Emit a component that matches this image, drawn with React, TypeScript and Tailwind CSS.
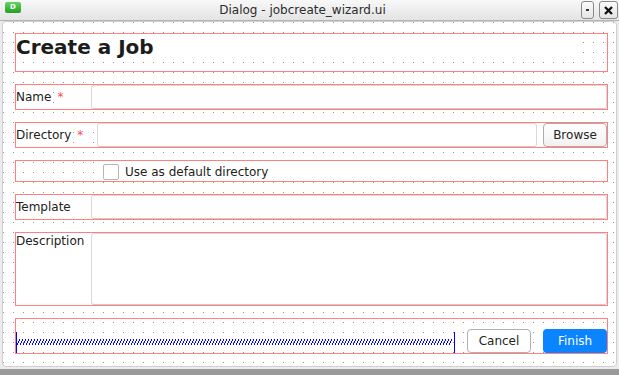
import { ReactNode } from "react"

// spring drawn by the designer for a horizontal spacer
const SPRING_W = 439
const SPRING_H = 21
const springPath = (() => {
  let d = `M0.5 0V${SPRING_H}M${SPRING_W - 0.5} 0V${SPRING_H}`
  for (let x = 1; x < SPRING_W - 3; x += 3) {
    d += `M${x} 13L${x + 3} 7`
  }
  return d
})()

const Box = ({ className = "", children }: { className?: string; children?: ReactNode }) => (
  <div className={`border border-[#ff8080] flex ${className}`}>{children}</div>
)

const fieldCls =
  "min-w-0 flex-1 bg-white border border-[#dadada] border-b-[#cbcbcb] rounded-[3px] outline-none px-1"

const App = () => {
  return (
    <div className="w-[619px] h-[375px] flex flex-col bg-[#ececec] overflow-hidden font-['DejaVu_Sans',sans-serif] text-[12px] text-[#222]">
      {/* Title bar */}
      <div className="h-[21px] shrink-0 flex items-center border-b border-[#b3b3b3] bg-[linear-gradient(#f8f8f8,#e4e4e4)]">
        <div className="w-[24px] self-start pt-[2px] pl-[5px]">
          <div className="w-[16px] h-[11px] rounded-[2px] bg-[linear-gradient(#63d563,#249e24)] flex items-center justify-center text-white text-[7px] font-bold leading-none">
            D
          </div>
        </div>
        <div className="flex-1 text-center leading-[20px] text-[#2c2c2c]">Dialog - jobcreate_wizard.ui</div>
        <div className="flex items-center gap-[5px] mr-[1px]">
          <div className="w-[13px] h-[18px] rounded-[3px] border border-[#8a8a8a] bg-[linear-gradient(#fbfbfb,#e4e4e4)] flex items-center justify-center">
            <span className="w-[3px] h-[2px] bg-[#333]" />
          </div>
          <div className="w-[19px] h-[18px] rounded-[3px] border border-[#8a8a8a] bg-[linear-gradient(#fbfbfb,#e4e4e4)] flex items-center justify-center">
            <svg width="9" height="9" viewBox="0 0 9 9">
              <path d="M1 1L8 8M8 1L1 8" stroke="#111" strokeWidth="2.3" />
            </svg>
          </div>
        </div>
      </div>

      {/* Form with designer grid */}
      <div className="mx-[2px] h-[346px] shrink-0 rounded-[4px] border border-[#d0d0d0] bg-white bg-[image:linear-gradient(to_bottom,transparent_1px,#fff_1px),linear-gradient(to_right,#929292_1px,transparent_1px)] bg-[size:10px_10px] pt-[11px] pl-[12px]">
        <div className="w-[593px] flex flex-col gap-[12px]">
          {/* Header */}
          <Box className="h-[39px] items-start">
            <div className="w-[562px] h-[26px] bg-white leading-[26px] text-[20px] font-bold text-[#1c1c1c]">
              Create a Job
            </div>
          </Box>

          {/* Name */}
          <Box className="h-[26px] gap-[6px]">
            <div className="w-[69px] flex gap-[6px]">
              <div className="bg-white flex items-center">Name</div>
              <div className="flex-1 bg-white flex items-center text-[#ff4a4a]">*</div>
            </div>
            <input className={fieldCls} />
          </Box>

          {/* Directory */}
          <Box className="h-[26px] gap-[6px]">
            <div className="w-[75px] flex gap-[6px]">
              <div className="bg-white flex items-center">Directory</div>
              <div className="flex-1 bg-white flex items-center text-[#ff4a4a]">*</div>
            </div>
            <input className={fieldCls} />
            <button className="w-[64px] rounded-[4px] border border-[#adadad] bg-[linear-gradient(#ffffff,#f1f1f1)] text-[#262626]">
              Browse
            </button>
          </Box>

          {/* Default directory */}
          <Box className="h-[22px] gap-[6px]">
            <div className="w-[75px]" />
            <label className="flex-1 bg-white flex items-center gap-[6px] pl-[6px] pt-[1px]">
              <span className="w-[16px] h-[16px] rounded-[2px] border border-[#b6b6b6] bg-white" />
              Use as default directory
            </label>
          </Box>

          {/* Template */}
          <Box className="h-[26px] gap-[6px]">
            <div className="w-[69px] bg-white flex items-center">Template</div>
            <input className={fieldCls} />
          </Box>

          {/* Description */}
          <Box className="h-[74px] gap-[6px]">
            <div className="w-[69px] bg-white pt-[1px] leading-[14px]">Description</div>
            <textarea className={`${fieldCls} resize-none`} />
          </Box>

          {/* Buttons */}
          <Box className="h-[36px] items-end gap-[12px]">
            <svg width={SPRING_W} height={SPRING_H} shapeRendering="crispEdges" className="shrink-0">
              <path d={springPath} stroke="#0000ff" strokeWidth="1" fill="none" />
            </svg>
            <button className="w-[64px] h-[24px] rounded-[4px] border border-[#b0b0b0] bg-white text-[#262626]">
              Cancel
            </button>
            <button className="w-[64px] h-[24px] rounded-[4px] bg-[#0a84ff] text-white">Finish</button>
          </Box>
        </div>
      </div>

      <div className="h-[2px] shrink-0" />
      <div className="h-[6px] shrink-0 bg-[#9a9a9a]" />
    </div>
  )
}

export default App
